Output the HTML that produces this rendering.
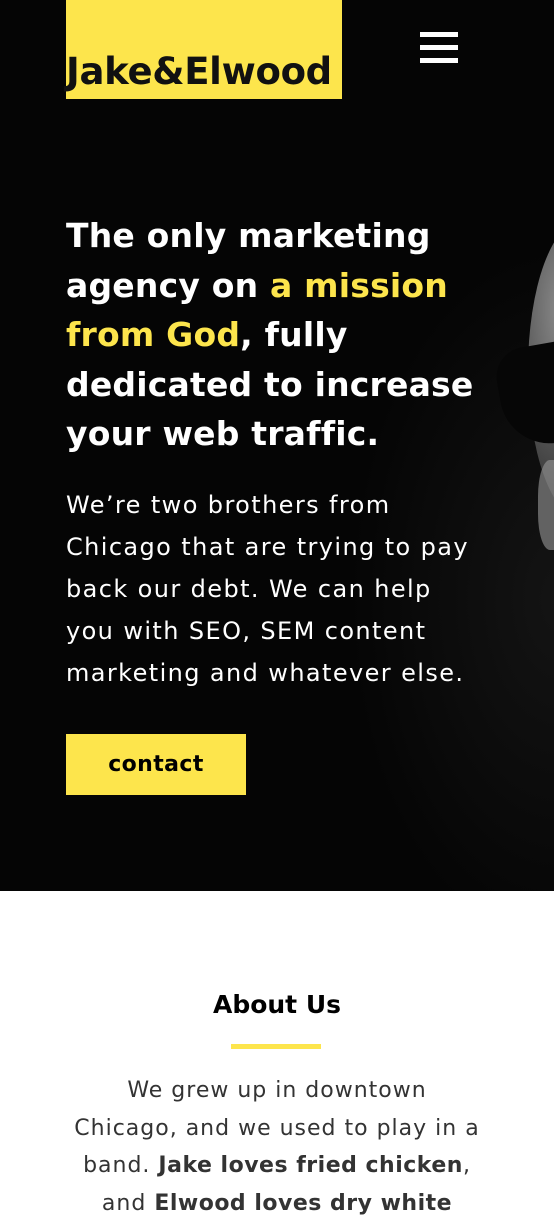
<!DOCTYPE html>
<html><head><style>
*{margin:0;padding:0;box-sizing:border-box}
body{width:554px;height:1212px;overflow:hidden;background:#fff;font-family:"DejaVu Sans","Liberation Sans",sans-serif}
.hero{position:absolute;left:0;top:0;width:554px;height:891px;background:radial-gradient(ellipse 300px 500px at 560px 600px,#141414,#050505 70%);overflow:hidden}
.logo{position:absolute;left:66px;top:0;width:276px;height:99px;background:#fde54c}
.logo span{position:absolute;left:0;top:50px;font-family:"DejaVu Sans",sans-serif;font-weight:bold;font-size:37px;letter-spacing:-0.3px;color:#111;line-height:44px;white-space:nowrap}
.bar{position:absolute;left:420px;width:38px;height:5px;background:#fff}
h1{position:absolute;left:66px;top:211px;font-size:33px;line-height:49.5px;color:#fff;font-weight:bold;white-space:nowrap;letter-spacing:0.2px}
h1 em{font-style:normal;color:#fde54c}
.p{position:absolute;left:66px;top:484px;font-size:24px;line-height:42px;color:#fff;white-space:nowrap;letter-spacing:1.4px}
.btn{position:absolute;left:66px;top:734px;width:180px;height:61px;background:#fde54c;color:#000;font-weight:bold;font-size:22px;letter-spacing:0.4px;text-align:center;line-height:61px}
.head{position:absolute;left:528px;top:220px;width:110px;height:300px;border-radius:50%;background:radial-gradient(ellipse at 30% 30%,#8a8a8a,#2a2a2a 75%)}
.glass{position:absolute;left:500px;top:345px;width:80px;height:100px;background:#060606;border-radius:30px 0 0 50px;transform:rotate(-10deg)}
.beard{position:absolute;left:538px;top:460px;width:30px;height:90px;background:#999;border-radius:40%;opacity:.6}
h2{position:absolute;left:0;width:554px;top:990px;text-align:center;font-size:25px;font-weight:bold;color:#000}
.line{position:absolute;left:231px;top:1044px;width:90px;height:5px;background:#fde54c}
.ab{position:absolute;left:0;width:554px;top:1072px;text-align:center;font-size:22px;line-height:37.5px;color:#333;letter-spacing:1.0px;white-space:nowrap}
.ab b{color:#333;letter-spacing:0.5px}
</style></head><body>
<div class="hero">
<div class="head"></div><div class="beard"></div><div class="glass"></div>
<div class="logo"><span>Jake&amp;Elwood</span></div>
<div class="bar" style="top:32px"></div><div class="bar" style="top:45px"></div><div class="bar" style="top:58px"></div>
<h1>The only marketing<br>agency on <em>a mission</em><br><em>from God</em>, fully<br>dedicated to increase<br>your web traffic.</h1>
<div class="p">We’re two brothers from<br>Chicago that are trying to pay<br>back our debt. We can help<br>you with SEO, SEM content<br>marketing and whatever else.</div>
<div class="btn">contact</div>
</div>
<h2>About Us</h2>
<div class="line"></div>
<div class="ab">We grew up in downtown<br>Chicago, and we used to play in a<br>band. <b>Jake loves fried chicken</b>,<br>and <b>Elwood loves dry white</b></div>
</body></html>
